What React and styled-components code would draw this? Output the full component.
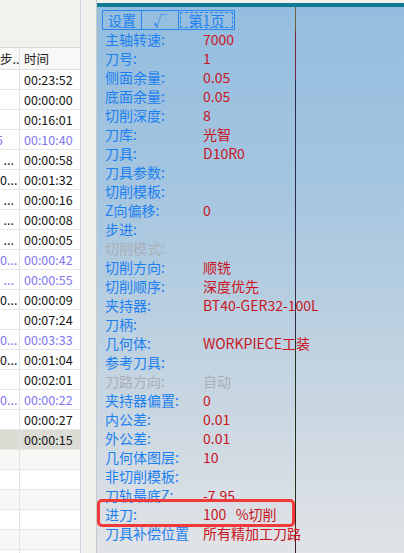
import React from 'react';
import styled, { createGlobalStyle } from 'styled-components';

const GlobalStyle = createGlobalStyle`
  html, body {
    margin: 0;
    padding: 0;
    overflow: hidden;
    background: #f1f1ed;
  }
  body {
    font-family: "Noto Sans CJK SC", "Noto Sans", sans-serif;
  }
`;

const jobs = [
  { name: '', time: '00:23:52' },
  { name: '', time: '00:00:00' },
  { name: '', time: '00:16:01' },
  { name: '5', time: '00:10:40', sub: true, lead: true },
  { name: '...', time: '00:00:58' },
  { name: '0...', time: '00:01:32' },
  { name: '...', time: '00:00:16' },
  { name: '...', time: '00:00:08' },
  { name: '...', time: '00:00:05' },
  { name: '0...', time: '00:00:42', sub: true },
  { name: '...', time: '00:00:55', sub: true },
  { name: '0...', time: '00:00:09' },
  { name: '', time: '00:07:24' },
  { name: '0...', time: '00:03:33', sub: true },
  { name: '0...', time: '00:01:04' },
  { name: '', time: '00:02:01' },
  { name: '0...', time: '00:00:22', sub: true },
  { name: '', time: '00:00:27' },
  { name: '', time: '00:00:15', selected: true },
  { name: '', time: '' },
  { name: '', time: '' },
  { name: '', time: '' },
  { name: '', time: '' },
  { name: '', time: '' },
  { name: '', time: '' },
];

const params = [
  { label: '主轴转速:', value: '7000' },
  { label: '刀号:', value: '1' },
  { label: '侧面余量:', value: '0.05' },
  { label: '底面余量:', value: '0.05' },
  { label: '切削深度:', value: '8' },
  { label: '刀库:', value: '光智' },
  { label: '刀具:', value: 'D10R0' },
  { label: '刀具参数:', value: '' },
  { label: '切削模板:', value: '' },
  { label: 'Z向偏移:', value: '0' },
  { label: '步进:', value: '' },
  { label: '切削模式:', value: '', off: true },
  { label: '切削方向:', value: '顺铣' },
  { label: '切削顺序:', value: '深度优先' },
  { label: '夹持器:', value: 'BT40-GER32-100L' },
  { label: '刀柄:', value: '' },
  { label: '几何体:', value: 'WORKPIECE工装' },
  { label: '参考刀具:', value: '' },
  { label: '刀路方向:', value: '自动', off: true },
  { label: '夹持器偏置:', value: '0' },
  { label: '内公差:', value: '0.01' },
  { label: '外公差:', value: '0.01' },
  { label: '几何体图层:', value: '10' },
  { label: '非切削模板:', value: '' },
  { label: '刀轨最底Z:', value: '-7.95' },
  { label: '进刀:', value: '100   %切削', marked: true },
  { label: '刀具补偿位置', value: '所有精加工刀路' },
];

const Screen = styled.div`
  display: flex;
  width: 404px;
  height: 553px;
  overflow: hidden;
`;

/* ---- job list on the left ---- */

const ListPane = styled.div`
  width: 80px;
  padding-top: 47px;
  background: #f1f1ed;
  border-right: 1px solid #cfd0dc;
  overflow: hidden;
`;

const ListHead = styled.div`
  display: grid;
  grid-template-columns: 20px 1fr;
  height: 21px;
  background: #f8f8f7;
  border-top: 1px solid #d9d9d9;
  border-bottom: 1px solid #dcdcdc;
  font-size: 12.5px;
  line-height: 21px;
  color: #222;
`;

const ListRow = styled.div`
  display: grid;
  grid-template-columns: 20px 1fr;
  height: 19px;
  border-bottom: 1px solid #e6e6e4;
  background: ${(p) => (p.$selected ? '#dddcd4' : p.$shade ? '#f7f7f5' : '#ffffff')};
  color: ${(p) => (p.$sub ? '#8176f0' : '#141414')};
  font-size: 12.5px;
  line-height: 19px;
`;

const NameCell = styled.div`
  border-right: 1px solid #e2e2e0;
  overflow: hidden;
  white-space: nowrap;
  text-align: ${(p) => (p.$lead ? 'left' : 'right')};
  padding-right: 5px;
  text-indent: ${(p) => (p.$lead ? '-4px' : '0')};
`;

const TimeCell = styled.div`
  padding-left: 4px;
  white-space: nowrap;
  overflow: hidden;
`;

const Splitter = styled.div`
  width: 15px;
  background: #f0f0ec;
  border-right: 1px solid #c9c9c9;
`;

/* ---- 3D viewport with the parameter overlay ---- */

const Viewport = styled.div`
  flex: 1;
  margin-top: 3px;
  display: flex;
  flex-direction: column;
  background: linear-gradient(#93bddf 0%, #a6c6e0 35%, #c6d5e1 70%, #e1e3e6 100%);
`;

const TopBar = styled.div`
  height: 4px;
  background: #0f7c94;
`;

const Stage = styled.div`
  flex: 1;
  display: flex;
`;

const ParamColumn = styled.div`
  width: 198px;
  padding-top: 3px;
  display: flex;
  flex-direction: column;
`;

const TabStrip = styled.div`
  display: flex;
  margin-left: 5px;
  width: 133px;
  height: 20px;
  box-sizing: border-box;
  border: 1px solid #2b86f0;
  color: #1d80f0;
  font-size: 14px;
  line-height: 18px;
`;

const Tab = styled.div`
  width: ${(p) => p.$w}px;
  border-right: ${(p) => (p.$last ? 'none' : '1px solid #2b86f0')};
  display: flex;
  justify-content: center;
  padding: ${(p) => (p.$current ? '1px' : '0')};
  box-sizing: border-box;
`;

const CurrentPage = styled.span`
  flex: 1;
  border: 1px dashed #2b86f0;
  text-align: center;
  line-height: 14px;
`;

const ParamRow = styled.div`
  position: relative;
  display: grid;
  grid-template-columns: 98px auto;
  padding-left: 8px;
  height: 19px;
  font-size: 14px;
  line-height: 19px;
  white-space: pre;

  ${(p) =>
    p.$marked &&
    `
    &::after {
      content: '';
      position: absolute;
      left: 0;
      right: 0;
      top: -6px;
      bottom: -3px;
      border: 3px solid #f03a3a;
      border-radius: 5px;
    }
  `}
`;

const Label = styled.span`
  color: ${(p) => (p.$off ? '#a9b0b7' : '#1d80f0')};
`;

const Value = styled.span`
  color: ${(p) => (p.$off ? '#a9b0b7' : '#c8151e')};
`;

const AxisLine = styled.div`
  width: 1px;
  background: linear-gradient(
    #6c5c40 0px,
    #6c5c40 24px,
    #7a2340 24px,
    #7a2340 73px,
    #2c2c48 73px,
    #2c2c48 330px,
    #1f3320 330px,
    #1f3320 500px,
    #3a2020 500px
  );
`;

const App = () => (
  <>
    <GlobalStyle />
    <Screen>
      <ListPane>
        <ListHead>
          <NameCell>步..</NameCell>
          <TimeCell>时间</TimeCell>
        </ListHead>
        {jobs.map((job, i) => (
          <ListRow key={i} $sub={job.sub} $selected={job.selected} $shade={!job.time && i % 2 === 1}>
            <NameCell $lead={job.lead}>{job.name}</NameCell>
            <TimeCell>{job.time}</TimeCell>
          </ListRow>
        ))}
      </ListPane>
      <Splitter />
      <Viewport>
        <TopBar />
        <Stage>
          <ParamColumn>
            <TabStrip>
              <Tab $w={39}>设置</Tab>
              <Tab $w={37}>√</Tab>
              <Tab $w={55} $last $current>
                <CurrentPage>第1页</CurrentPage>
              </Tab>
            </TabStrip>
            {params.map((p) => (
              <ParamRow key={p.label} $marked={p.marked}>
                <Label $off={p.off}>{p.label}</Label>
                <Value $off={p.off}>{p.value}</Value>
              </ParamRow>
            ))}
          </ParamColumn>
          <AxisLine />
        </Stage>
      </Viewport>
    </Screen>
  </>
);

export default App;
